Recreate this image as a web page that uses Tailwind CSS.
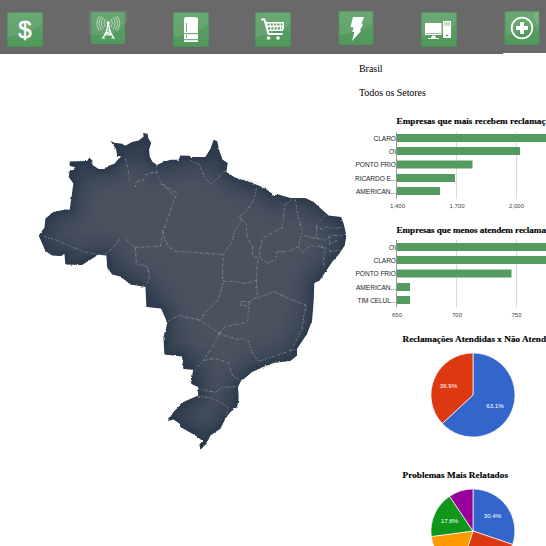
<!DOCTYPE html>
<html lang="pt-BR">
<head>
<meta charset="utf-8">
<title>Reclamações - Brasil</title>
<script src="https://cdn.jsdelivr.net/npm/@tailwindcss/browser@4"></script>
</head>
<body class="w-[546px] h-[546px] overflow-hidden bg-white text-black font-['Liberation_Serif',serif]">
<svg class="absolute" width="0" height="0" aria-hidden="true">
  <defs>
    <linearGradient id="tile" x1="0" y1="0" x2="0" y2="1"><stop offset="0" stop-color="#5da067"/><stop offset="1" stop-color="#51995b"/></linearGradient>
    <symbol id="button" viewBox="0 0 36 35"><rect width="36" height="35" rx="2" fill="url(#tile)"/><path d="M1 1H35V12Q31 16 23 19T1 25Z" fill="#fff" opacity=".09"/><rect x=".5" y=".5" width="35" height="34" rx="2" fill="none" stroke="#4c8754" stroke-opacity=".4"/></symbol>
  </defs>
</svg>
<header class="h-[54px] bg-[#696969] border-b border-[#626262] flex items-start justify-between pl-[7px] pr-[6px] relative">
  <svg class="mt-3" width="36" height="35"><use href="#button"/><text x="18" y="25.500" text-anchor="middle" font-family="Liberation Sans, sans-serif" font-size="24" fill="#fff" stroke="#fff" stroke-width=".5">$</text></svg>
  <svg class="mt-[11px] overflow-visible" width="36" height="35">
    <path d="M-1 0H37V10Q32 20 26 24H-1Z" fill="#777b77"/><rect x="1" y="1" width="34" height="32" rx="2" fill="url(#tile)"/><path d="M2 2H34V12Q29 20 22 24H2Z" fill="#fff" opacity=".08"/>
    <g fill="none" stroke="#fff" stroke-width=".7" opacity=".75"><path d="M15.500 8Q12.500 12 15.500 16M13.500 6.500Q9.500 12 13.500 18M11.500 5.500Q6.500 12 11.500 19M9.500 5Q4 12 9.500 20M21 8Q24 12 21 16M23 6.500Q27 12 23 18M25 5.500Q30 12 25 19M27 5Q32.500 12 27 20"/></g>
    <circle cx="18.200" cy="12" r="1.700" fill="#fff"/><path d="M18.200 12L16.500 20L13 27M18.200 12L20 20L23.500 27M16.500 19H20M15 23L21 20M21.500 24L16 21M14.500 24H22M11.500 27H15M21.500 27H25" fill="none" stroke="#fff" stroke-width="1.200"/>
  </svg>
  <svg class="mt-3" width="36" height="35"><use href="#button"/><path d="M11 7Q11 5 14 5H21Q25 5 25 7V30H11Z" fill="#fff"/><path d="M11 21.700H25M11 27.700H25" stroke="#5a9d63"/><path d="M13.500 11V20M13.500 23V26" stroke="#5a9d63" stroke-width=".8"/></svg>
  <svg class="mt-[12px]" width="36" height="35"><use href="#button"/><path d="M7 7.500H9.500L13.500 22H27" fill="none" stroke="#fff" stroke-width="2" stroke-linecap="round" stroke-linejoin="round"/><path d="M10.500 10H29V17L27.500 19H12.500Z" fill="#fff"/><path d="M12.500 12.500H27.500M13 16.400H27" stroke="#5a9d63" stroke-width="2.100" stroke-dasharray="2.100 1.200"/><circle cx="13.500" cy="26" r="1.800" fill="#fff"/><circle cx="23" cy="26" r="1.800" fill="#fff"/></svg>
  <svg class="mt-[11px]" width="36" height="34" viewBox="0 0 36 34"><use href="#button" width="36" height="34"/><path d="M15 6H26L23.500 13L25 13.500L22 19L23 20L14 30L16.300 21H14.200L15.700 16.500L12.500 16Z" fill="#fff"/></svg>
  <svg class="mt-3" width="36" height="35"><use href="#button"/><path d="M4 11H20.500V23H4ZM11 23.500H14L15 26H18V27H7V26H10ZM22 9H30V26H22Z" fill="#fff"/><path d="M5 21.500H20.500M23 11H29M23 13H29" stroke="#7eaf84" stroke-width=".8"/><circle cx="26" cy="23.500" r="1" fill="#4d9156"/></svg>
  <svg class="mt-[11px]" width="36" height="34" viewBox="0 0 36 34"><use href="#button" width="36" height="34"/><path d="M29 6Q31 0 35 1V16L32 19Q34 11 29 6Z" fill="#fff" opacity=".12"/><circle cx="18" cy="17" r="10.300" fill="none" stroke="#fff" stroke-width="1.700"/><path d="M18 11V23M12 17H24" stroke="#fff" stroke-width="4"/></svg>
  <div class="absolute right-0 -bottom-px w-[43px] h-px bg-white"></div>
</header>
<main class="flex h-[492px]">
  <svg class="shrink-0" width="350" height="492" viewBox="0 54 350 492" role="img" aria-label="Mapa do Brasil">
    <defs>
      <path id="brasil" d="M69.300 161L86.700 160.700 89 157 92 160V164.700L98.300 168.700H104L108.300 165.300 114 163.300 117.300 159.300 121 156 116.700 155.300 116 150 114 146 110 140.700 115 142.700 121.700 143.300 125 145.300 131.700 141.700 138.300 140 143.300 136 142.700 132.700 147.300 133.300 147.700 137.300 150.700 142.700 148.700 149.300 149.300 156 152 161.300 156.700 164.700 161.700 162 170 159.300H178.300L180 155 189.300 155.300 190 156.700H205L210 148.300 213.300 139.300 216.700 140.700 219.300 151.700 222.300 159.300 227.300 162.700 226 171.700 235 177.300 246.700 180.700 258.300 185 265 188.300 270 191.700 271.300 195 278.300 194 290 197.700 305 197.700 313.300 201.700 321.700 209.300 328.300 215 340.700 216.700 343.300 223.300 346 235 344.300 245 338.300 254 331.700 261.700 325 271.700 319.300 280 314 282.700 313.300 300 311.700 320 306.700 333.300 296.700 348.300V355L290 360.700 273 362.700 263 366.700 251.700 371.700 240 381.700 237.700 386.700 238.300 398.300 236.700 406.700 230 411.700 225 418.300 220 428.300 210 435 206 443.300 200 449.300 199 444 202.300 440.700 195 435 180 426.700 179 423 173 419 167.300 420.700 173 411.700 183 401.700 197.700 395V386.700L190.700 383.300 192.700 369.300 183 368.700 181.700 356 164 354 163 336.700 167 322.700 160.700 308 146 306.700 145 286.700 130 284 125 280 120 276 111.700 274 106.700 266.700 106 255 98 254.300 90 259.300 81.700 264.700 65 264 64 253.300 60.700 255.700 51.700 255 45 250.700 38.300 235 44 227.300 45 218 53 211.700 65 209 69.300 209.300 73 183 68.300 176.700 69.300 170 75 169 74.300 166.700 69.300 165.700Z"/>
      <clipPath id="land"><use href="#brasil"/></clipPath>
      <filter id="soft" x="-10%" y="-10%" width="120%" height="120%"><feGaussianBlur stdDeviation="9"/></filter>
      <filter id="edge" x="-10%" y="-10%" width="120%" height="120%"><feGaussianBlur stdDeviation="2.500"/></filter>
      <filter id="coast" x="-2%" y="-2%" width="104%" height="104%" color-interpolation-filters="sRGB"><feTurbulence type="fractalNoise" baseFrequency=".3" numOctaves="2" seed="3"/><feDisplacementMap in="SourceGraphic" scale="2.200" xChannelSelector="R" yChannelSelector="G"/></filter>
    </defs>
    <g filter="url(#coast)" transform="translate(.4 .4)">
      <g clip-path="url(#land)">
        <use href="#brasil" fill="#4b515f"/>
        <use href="#brasil" fill="none" stroke="#1d3043" stroke-width="20" opacity=".6" filter="url(#soft)"/>
        <use href="#brasil" fill="none" stroke="#14263c" stroke-width="3" opacity=".5" filter="url(#edge)"/>
      </g>
      <g fill="none" stroke="#c3cbd0" stroke-width=".65" stroke-opacity=".65" stroke-dasharray="2.500 1.300 1 1.500" stroke-linejoin="round">
        <path d="M44 236L57 240 70 246 86 252 98 254 106 253 115 245 119 239M125 239L135 247 160 246 163 230 175 196 162 184 156 174V165M162 230L167 245 175 251 223 254"/>
        <path d="M125 158L128 170 129 182M135 187L136 181 143 180 145 174 156 172M162 184L175 192 177 193"/>
        <path d="M135 247L136 264 147 266 149 276 148 280 145 286M190 160L199 164 205 178 211 184 217 178 226 169"/>
        <path d="M256 188L253 200 246 211 238 217 241 220 234 231 232 241 223 254 222 276 223 281 218 299 205 312 200 320"/>
        <path d="M240 217L246 225 247 237 252 246 252 255 258 258 256 270 256 280 257 296 250 301 248 312 247 322 225 326 219 333"/>
        <path d="M292 199L284 205 282 227 273 232 262 238 259 252 260 258 268 263 275 259 277 251 288 251 298 246 300 239 302 231 297 214 295 199"/>
        <path d="M325 215L317 223 316 227 323 229 327 226 332 228 343 227M316 227V238L303 235M298 246L302 252 310 245 321 246 332 251 343 249M316 238L326 239 331 235 342 235M321 246L325 251 322 261 325 268M329 236V243L337 240"/>
        <path d="M223 281L233 281 244 283 256 280M257 298L273 291 288 298 306 305 303 317 302 329 295 341 290 350 279 354 258 361 251 351 247 338 236 339 219 333 200 320 179 315 167 321"/>
        <path d="M219 333L210 350 203 360M203 360L214 358 228 362 232 375 241 381M203 360L194 370M197 388L215 392 222 387 237 386M197 396L209 397 220 402 228 407 225 417M241 301H248V305H240ZM302 318L306 323M290 350L298 349"/>
      </g>
    </g>
    <path d="M238 179L247 180 258 183 266 188 269 191M261 368L269 366 277 362" fill="none" stroke="#ccc" stroke-width=".8" stroke-dasharray="2 1"/>
  </svg>
  <aside class="w-[196px] shrink-0 flex flex-col overflow-hidden">
    <div class="h-[57px] pl-[9px] pt-2 text-[10px] leading-[14px] tracking-[-0.05px] flex flex-col gap-2.5">
      <p>Brasil</p>
      <p>Todos os Setores</p>
    </div>
    <svg class="shrink-0" width="196" height="110" viewBox="350 111 196 110">
      <text x="396.500" y="124.300" font-size="9.200" font-weight="bold" textLength="149" stroke="#000" stroke-width=".15">Empresas que mais recebem reclamaç</text>
      <path d="M456.500 132V199M516.500 132V199" stroke="#d9d9d9"/>
      <path d="M397 134H560V142H397ZM397 147H520V155H397ZM397 160.500H472.500V168.500H397ZM397 174H455V182H397ZM397 187H440V195H397Z" fill="#539b5f"/>
      <path d="M396.500 132V199" stroke="#999"/>
      <g font-family="Liberation Sans, sans-serif" font-size="6.600" fill="#222" text-anchor="end">
        <text x="396" y="140.700" textLength="22.500">CLARO</text><text x="396" y="153.700">OI</text><text x="396" y="167.200" textLength="40.500">PONTO FRIO</text><text x="396" y="180.700" textLength="41">RICARDO E...</text><text x="396" y="193.700" textLength="40">AMERICAN...</text>
      </g>
      <g font-family="Liberation Sans, sans-serif" font-size="6" fill="#444" text-anchor="middle"><text x="397.500" y="208.300">1,400</text><text x="457" y="208.300">1,700</text><text x="516.500" y="208.300">2,000</text></g>
    </svg>
    <svg class="shrink-0" width="196" height="109" viewBox="350 221 196 109">
      <text x="396.500" y="232.800" font-size="9.200" font-weight="bold" textLength="149.500" stroke="#000" stroke-width=".15">Empresas que menos atendem reclama</text>
      <path d="M456.500 240V307M516.500 240V307" stroke="#d9d9d9"/>
      <path d="M397 243H560V251H397ZM397 256H560V264H397ZM397 269.500H511.500V277.500H397ZM397 283H410V291H397ZM397 296H410V304H397Z" fill="#539b5f"/>
      <path d="M396.500 240V307" stroke="#999"/>
      <g font-family="Liberation Sans, sans-serif" font-size="6.600" fill="#222" text-anchor="end">
        <text x="396" y="249.500">OI</text><text x="396" y="262.500" textLength="22.500">CLARO</text><text x="396" y="276.200" textLength="40.500">PONTO FRIO</text><text x="396" y="289.500" textLength="40">AMERICAN...</text><text x="396" y="302.500" textLength="38.500">TIM CELUL...</text>
      </g>
      <g font-family="Liberation Sans, sans-serif" font-size="6" fill="#444" text-anchor="middle"><text x="397" y="317">650</text><text x="457" y="317">700</text><text x="516.500" y="317">750</text></g>
    </svg>
    <svg class="shrink-0" width="196" height="135" viewBox="350 330 196 135">
      <text x="402.500" y="342.300" font-size="9.200" font-weight="bold" textLength="143.500" stroke="#000" stroke-width=".15">Reclamações Atendidas x Não Atend</text>
      <g stroke="#fff" stroke-width=".7"><path d="M473 395V353A42 42 0 1 1 442.200 423.600Z" fill="#3366cc"/><path d="M473 395L442.200 423.600A42 42 0 0 1 473 353Z" fill="#dc3912"/></g>
      <g font-family="Liberation Sans, sans-serif" font-size="6.200" fill="#fff" text-anchor="middle"><text x="448.500" y="387.500">36.9%</text><text x="495" y="408">63.1%</text></g>
    </svg>
    <svg class="shrink-0" width="196" height="81" viewBox="350 465 196 81">
      <text x="402.500" y="478" font-size="9.200" font-weight="bold" textLength="105.500" stroke="#000" stroke-width=".15">Problemas Mais Relatados</text>
      <g stroke="#fff" stroke-width=".7"><path d="M473 531V489A42 42 0 0 1 512.600 544.500Z" fill="#3366cc"/><path d="M473 531L512.600 544.500A42 42 0 0 1 460 571Z" fill="#dc3912"/><path d="M473 531L460 571A42 42 0 0 1 431.300 536.500Z" fill="#ff9900"/><path d="M473 531L431.300 536.500A42 42 0 0 1 449.600 496.300Z" fill="#109618"/><path d="M473 531L449.600 496.300A42 42 0 0 1 473 489Z" fill="#990099"/></g>
      <g font-family="Liberation Sans, sans-serif" font-size="6.200" fill="#fff" text-anchor="middle"><text x="492.500" y="518">30.4%</text><text x="449.500" y="523">17.8%</text></g>
    </svg>
  </aside>
</main>
</body>
</html>
